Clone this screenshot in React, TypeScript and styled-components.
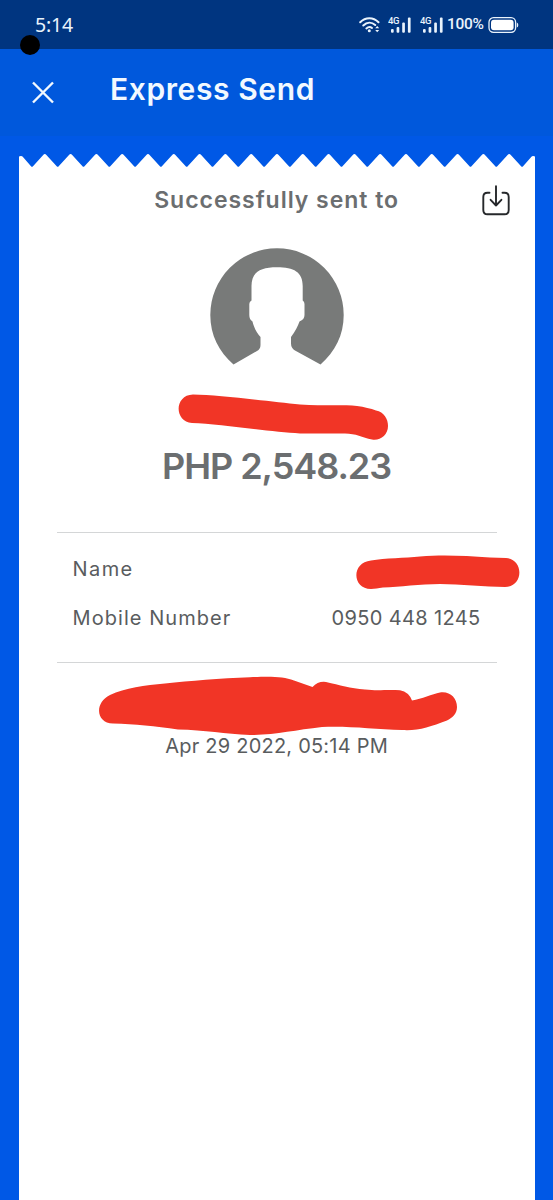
import React from "react";
import styled, { createGlobalStyle } from "styled-components";

const GlobalStyle = createGlobalStyle`
  * { box-sizing: border-box; }
  body { margin: 0; background: #0058e6; }
`;

const Screen = styled.div`
  position: relative;
  display: flex;
  flex-direction: column;
  width: 553px;
  height: 1200px;
  overflow: hidden;
  background: #0058e6;
  font-family: Inter, "Liberation Sans", sans-serif;
`;

const StatusBar = styled.header`
  display: flex;
  justify-content: space-between;
  height: 49px;
  padding: 0 34px 0 35px;
  background: #003580;
  color: #e9f3fc;
`;

const Clock = styled.time`
  font: 400 19.5px/50px "Noto Sans", sans-serif;
  letter-spacing: -0.2px;
`;

const StatusIcons = styled.div`
  display: flex;
  align-items: center;
`;

const SignalIcon = styled.svg`
  margin-left: 8px;
`;

const Percent = styled.span`
  width: 37px;
  margin: 0 4px 0 3px;
  font: 500 15.5px/49px Roboto, sans-serif;
  letter-spacing: -0.35px;
`;

const Camera = styled.div`
  position: absolute;
  left: 20px;
  top: 35px;
  width: 20px;
  height: 20px;
  border-radius: 50%;
  background: #000;
`;

const TitleBar = styled.div`
  display: flex;
  height: 87px;
  padding: 0 31px;
  background: #0058dc;
  color: #f2f9ff;
`;

const CloseButton = styled.button`
  width: 24px;
  height: 88px;
  padding: 0;
  border: 0;
  background: none;
  color: inherit;
`;

const Title = styled.h1`
  margin: 0 0 0 55px;
  font: 600 30px/81px Inter, sans-serif;
  letter-spacing: 0.6px;
`;

const Receipt = styled.main`
  display: flex;
  flex-direction: column;
  flex: 1;
  margin: 17px 18.3px 0 18.5px;
`;

const TornEdge = styled.svg`
  display: block;
  width: 516.2px;
  height: 15px;
`;

const Paper = styled.div`
  display: flex;
  flex-direction: column;
  align-items: center;
  flex: 1;
  background: #fff;
  color: #6b6e70;
`;

const Heading = styled.div`
  display: grid;
  grid-template-columns: 1fr auto 1fr;
  width: 100%;
  height: 64px;
`;

const Lead = styled.h2`
  grid-column: 2;
  margin: 0;
  font: 600 23px/64px Inter, sans-serif;
  letter-spacing: 0.97px;
`;

const Download = styled.button`
  justify-self: end;
  height: 30px;
  margin: 17px 25px 0 0;
  padding: 0;
  border: 0;
  background: none;
`;

const Avatar = styled.svg`
  margin-top: 16px;
`;

const Amount = styled.div`
  margin-top: 77px;
  font: 600 36px/48px Inter, sans-serif;
  letter-spacing: -1.05px;
`;

const Details = styled.dl`
  display: flex;
  flex-direction: column;
  width: 440px;
  height: 131px;
  margin: 42px 0 0;
  padding: 12px 16px;
  border: solid #d4d6d7;
  border-width: 1.5px 0;
`;

const Row = styled.div`
  display: flex;
  justify-content: space-between;
  font: 400 20px/49px Inter, sans-serif;
  color: #595c5e;
`;

const Term = styled.dt<{ $spacing: number }>`
  letter-spacing: ${(p) => p.$spacing}px;
`;

const Value = styled.dd`
  margin: 0;
  letter-spacing: 0.36px;
`;

const DateLine = styled.time`
  margin-top: 67px;
  font: 400 20px/32px Inter, sans-serif;
  letter-spacing: 0.22px;
  color: #595c5e;
`;

const Scribbles = styled.svg`
  position: absolute;
  left: 0;
  top: 0;
  pointer-events: none;
`;

const zigzag = () => {
  let d = "M0 15V3.6Q2.5 2.2 4.4 4.4L12 13.2Q13 14.3 14 13.2";
  for (let i = 0; i < 19; i++) {
    const x = 12.9 + i * 25.8;
    d += `L${x + 11.3} 2Q${x + 12.9} .2 ${x + 14.5} 2L${x + 24.8} 13.2Q${x + 25.8} 14.3 ${x + 26.8} 13.2`;
  }
  return d + "L511.8 4.4Q513.7 2.2 516.2 3.6V15Z";
};

function Signal() {
  return (
    <SignalIcon width="24" height="18" viewBox="0 0 24 18" fill="currentColor">
      <text x="0" y="8.2" fontFamily="Roboto, sans-serif" fontSize="9.5" fontWeight="500" textLength="11.5">4G</text>
      <rect x="3" y="13" width="2.7" height="3.8" rx="1" />
      <rect x="8.6" y="11" width="2.7" height="5.8" rx="1" />
      <rect x="14.2" y="6.5" width="2.7" height="10.3" rx="1" />
      <rect x="19.9" y="1.6" width="2.7" height="15.2" rx="1" />
    </SignalIcon>
  );
}

export default function App() {
  return (
    <Screen>
      <GlobalStyle />
      <StatusBar>
        <Clock>5:14</Clock>
        <StatusIcons>
          <svg width="21" height="18" viewBox="0 0 21 18" fill="none" stroke="currentColor" strokeWidth="2" strokeLinecap="round">
            <path d="M1.200 6.200C6.500 .8 14.200 .8 19.500 6.200M4.300 9.500C8 5.900 12.700 5.900 16.200 9M7.400 12.400C9.300 10.700 11.300 10.700 13 12" />
            <circle cx="10.300" cy="14.800" r="1.500" fill="currentColor" stroke="none" />
            <path d="M16.200 12.300l2-2.300 2 2.300zM16.200 14l2 2.300 2-2.300z" fill="currentColor" stroke="none" />
          </svg>
          <Signal />
          <Signal />
          <Percent>100%</Percent>
          <svg width="31" height="18" viewBox="0 0 31 18">
            <rect x="1" y="1.700" width="26.600" height="14.600" rx="4.500" fill="none" stroke="#e9f3fc" strokeWidth="1.300" />
            <rect x="3" y="3.700" width="22.600" height="10.600" rx="3" fill="#fff" />
            <path d="M28.800 6.500Q30.300 7 30.300 9T28.800 11.500Z" fill="#e9f3fc" />
          </svg>
        </StatusIcons>
      </StatusBar>
      <Camera />
      <TitleBar>
        <CloseButton aria-label="Close">
          <svg width="24" height="24" viewBox="0 0 24 24" fill="none" stroke="currentColor" strokeWidth="2.400">
            <path d="M2 2.500L22 22.500M22 2.500L2 22.500" />
          </svg>
        </CloseButton>
        <Title>Express Send</Title>
      </TitleBar>
      <Receipt>
        <TornEdge viewBox="0 0 516.2 15" preserveAspectRatio="none">
          <path d={zigzag()} fill="#fff" />
        </TornEdge>
        <Paper>
          <Heading>
            <Lead>Successfully sent to</Lead>
            <Download aria-label="Download">
              <svg width="28" height="31" viewBox="0 0 28 31" fill="none" stroke="#26282b" strokeWidth="1.900" strokeLinecap="round" strokeLinejoin="round">
                <path d="M7.500 7.800H5.500Q1.300 7.800 1.300 12V25Q1.300 29.300 5.500 29.300H22.500Q26.700 29.300 26.700 25V12Q26.700 7.800 22.500 7.800H20.500M14 1.200V20.500M8.600 14.800L14 20.500 19.400 14.800" />
              </svg>
            </Download>
          </Heading>
          <Avatar width="134" height="117" viewBox="0 0 134 117">
            <path fill="#787a79" d="M23.500 116.500C9 104 .3 87 .3 67A66.700 66.700 0 0 1 133.700 67C133.700 87 125 104 110.500 116.500L85 102.500Q81 100 81 95.500V89C85 84 88 78 89.500 73.500Q94.500 71.500 94.500 67V56Q94.500 53.500 92.700 52.500V38C92.700 24 84 19.200 67 19.200S41.500 24 41.500 38V52.500Q39.300 53.500 39.300 56V67Q39.300 71.500 42.500 73.500C44 80 47 85 50.500 89V97Q50.500 101 47 103Z" />
          </Avatar>
          <Amount>PHP 2,548.23</Amount>
          <Details>
            <Row>
              <Term $spacing={1.4}>Name</Term>
            </Row>
            <Row>
              <Term $spacing={1.04}>Mobile Number</Term>
              <Value>0950 448 1245</Value>
            </Row>
          </Details>
          <DateLine>Apr 29 2022, 05:14 PM</DateLine>
        </Paper>
      </Receipt>
      <Scribbles width="553" height="1200" viewBox="0 0 553 1200" fill="#f13526">
        <path d="M193 394.500C220 395 270 401.500 300 404.500C325 406 345 404.500 357 406Q368 407.500 376 410.500C384 412 388 419 388 426C388 435 380 441 372 439.500C362 437.500 356 433.500 345 433.500H300C270 432 220 424 192 423C174 422 174 395 193 394.500Z" />
        <path d="M371 560.500C385 558 405 558 420 556.500C445 554.500 465 556 490 557.500L506 558C524 559 524 587 505 587C485 587 460 584 440 584C420 584 400 587 383 587.500C378 588 375 589 371 589C352 589 351 562.500 371 560.500Z" />
        <path d="M110 695C125 688 145 685 165 683.500C190 681 220 678 250 677.200C272 676.500 283 676.500 294 680.500L312.500 687Q318 681 326 682C340 685 350 688.500 365 689.500C378 691 385 689.500 400 690.200Q409 692 412 700.500C422 699 432 694 440 692.500C450 691 457 698 457 707C457 714 452 718 447 720.500C430 727 418 731 402 730C375 729 345 725.500 322 727C295 730 275 735 250 735C225 734 205 730 178 729.500C155 726 135 724 113 723.500C96 723 94 703 110 695Z" />
      </Scribbles>
    </Screen>
  );
}
